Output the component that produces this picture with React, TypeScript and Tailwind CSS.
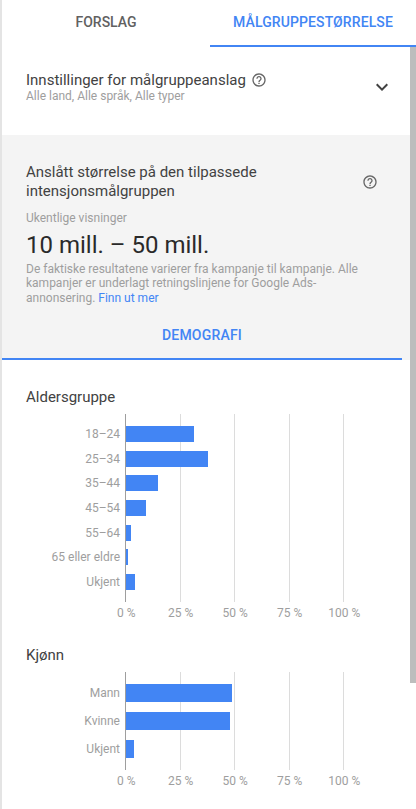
const ageRows = [
  { label: "18–24", width: 68 },
  { label: "25–34", width: 82 },
  { label: "35–44", width: 32 },
  { label: "45–54", width: 20 },
  { label: "55–64", width: 5 },
  { label: "65 eller eldre", width: 2 },
  { label: "Ukjent", width: 9 },
];

const genderRows = [
  { label: "Mann", width: 106 },
  { label: "Kvinne", width: 104 },
  { label: "Ukjent", width: 8 },
];

const ticks = ["0 %", "25 %", "50 %", "75 %", "100 %"];

function HelpIcon({ className }: { className: string }) {
  return (
    <svg viewBox="0 0 24 24" className={className} fill="#666666" aria-hidden>
      <path d="M11 18h2v-2h-2v2zm1-16C6.48 2 2 6.48 2 12s4.48 10 10 10 10-4.48 10-10S17.52 2 12 2zm0 18c-4.41 0-8-3.59-8-8s3.59-8 8-8 8 3.59 8 8-3.59 8-8 8zm0-14c-2.21 0-4 1.79-4 4h2c0-1.1.9-2 2-2s2 .9 2 2c0 2-3 1.75-3 5h2c0-2.25 3-2.5 3-5 0-2.21-1.79-4-4-4z" />
    </svg>
  );
}

function BarChart({
  rows,
  barHeight,
  rowGap,
  padY,
}: {
  rows: { label: string; width: number }[];
  barHeight: string;
  rowGap: string;
  padY: string;
}) {
  return (
    <div className="mt-[8px] flex flex-col">
      <div className="flex">
        <div className={`flex w-[94px] flex-col items-end ${rowGap} ${padY}`}>
          {rows.map((row) => (
            <div key={row.label} className={`flex items-center whitespace-nowrap text-[12px] text-[#9e9e9e] ${barHeight}`}>
              {row.label}
            </div>
          ))}
        </div>
        <div className={`relative ml-[5px] flex w-[218px] flex-col ${rowGap} ${padY} border-l border-[#9e9e9e]`}>
          <span className="absolute top-0 bottom-0 left-[54px] w-px bg-[#dcdcdc]" />
          <span className="absolute top-0 bottom-0 left-[108px] w-px bg-[#dcdcdc]" />
          <span className="absolute top-0 bottom-0 left-[163px] w-px bg-[#dcdcdc]" />
          <span className="absolute top-0 bottom-0 left-[217px] w-px bg-[#dcdcdc]" />
          {rows.map((row) => (
            <div
              key={row.label}
              className={`relative bg-[#4285f4] ${barHeight}`}
              style={{ width: row.width }}
            />
          ))}
        </div>
      </div>
      <div className="mt-[3px] ml-[73px] flex h-[16px] items-center text-[12px] text-[#9e9e9e]">
        {ticks.map((tick) => (
          <span key={tick} className="w-[54.5px] shrink-0 text-center whitespace-nowrap">
            {tick}
          </span>
        ))}
      </div>
    </div>
  );
}

export default function App() {
  return (
    <div className="relative h-[809px] w-[416px] overflow-hidden bg-white font-['Roboto',sans-serif]">
      <div className="h-full border-l-2 border-[#e4e4e4]">
        <div className="flex h-[47px]">
          <div className="flex w-[208px] items-center justify-center pb-[3px] text-[14px] font-medium text-[#616161]">
            FORSLAG
          </div>
          <div className="flex flex-1 items-center justify-center border-b-2 border-[#4285f4] text-[14px] font-medium tracking-[0.1px] text-[#4285f4]">
            MÅLGRUPPESTØRRELSE
          </div>
        </div>

        <div className="flex h-[88px] items-center justify-between pr-[22px] pb-[8px] pl-[24px]">
          <div>
            <div className="flex items-center gap-[5px] text-[15px] leading-[18px] text-[#424242]">
              Innstillinger for målgruppeanslag
              <HelpIcon className="h-[16px] w-[16px]" />
            </div>
            <div className="text-[12px] leading-[14px] text-[#9e9e9e]">Alle land, Alle språk, Alle typer</div>
          </div>
          <svg viewBox="0 0 24 24" className="h-[24px] w-[24px]" fill="#424242" aria-hidden>
            <path d="M7.41 8.59 12 13.17l4.59-4.58L18 10l-6 6-6-6z" />
          </svg>
        </div>

        <div className="mr-[6px] bg-[#f4f4f4]">
          <div className="px-[24px] pt-[28px]">
            <div className="flex items-center justify-between pr-[8px]">
              <div className="w-[300px] text-[15px] leading-[18.5px] text-[#424242]">
                Anslått størrelse på den tilpassede intensjonsmålgruppen
              </div>
              <HelpIcon className="h-[16px] w-[16px]" />
            </div>
            <div className="mt-[11px] text-[12px] leading-[14px] text-[#9e9e9e]">Ukentlige visninger</div>
            <div className="mt-[6px] text-[24px] leading-[28px] text-[#2a2a2a]">10 mill. – 50 mill.</div>
            <div className="mt-[3px] w-[340px] text-[12px] leading-[14.3px] text-[#9e9e9e]">
              De faktiske resultatene varierer fra kampanje til kampanje. Alle kampanjer er underlagt retningslinjene for Google Ads-annonsering.{" "}
              <span className="text-[#4285f4]">Finn ut mer</span>
            </div>
          </div>
          <div className="mt-[16px] mr-[8px] flex h-[30px] items-center justify-center text-[14px] font-medium tracking-[0.2px] text-[#4285f4]">
            DEMOGRAFI
          </div>
          <div className="mt-[7px] mr-[8px] h-[2px] bg-[#4285f4]" />
        </div>

        <div className="pt-[28px] pl-[24px]">
          <div className="text-[15px] leading-[18px] text-[#424242]">Aldersgruppe</div>
          <BarChart rows={ageRows} barHeight="h-[16px]" rowGap="gap-[8.67px]" padY="py-[12px]" />
        </div>

        <div className="pt-[25px] pl-[24px]">
          <div className="text-[15px] leading-[18px] text-[#424242]">Kjønn</div>
          <BarChart rows={genderRows} barHeight="h-[18px]" rowGap="gap-[10px]" padY="py-[12px]" />
        </div>
      </div>

      <div className="absolute top-[47px] right-0 h-[636px] w-[6px] bg-[#bdbdbd]" />
    </div>
  );
}
